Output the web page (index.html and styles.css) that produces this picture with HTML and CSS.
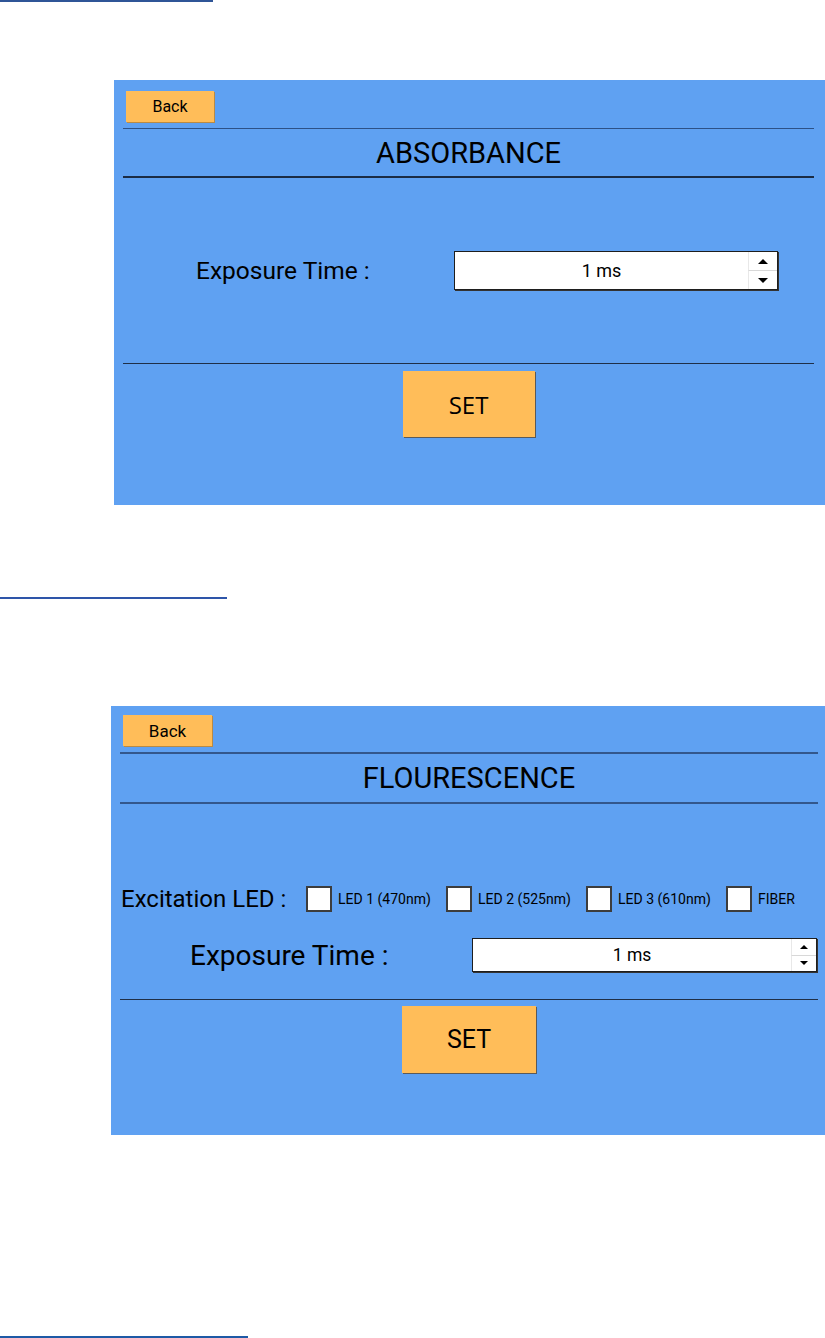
FILE: index.html
```html
<!DOCTYPE html>
<html>
<head>
<meta charset="utf-8">
<link rel="stylesheet" href="styles.css">
</head>
<body>
<div class="page">
  <div class="rule rule-a"></div>

  <section class="panel panel-abs">
    <div class="topbar"><button class="back">Back</button></div>
    <div class="hr hr-thin"></div>
    <h1 class="title">ABSORBANCE</h1>
    <div class="hr hr-thick"></div>
    <div class="body body-abs">
      <div class="row">
        <span class="label label-abs">Exposure Time :</span>
        <div class="spin spin-abs">
          <span class="spin-value">1 ms</span>
          <span class="spin-btns">
            <span class="spin-btn"><span class="tri up"></span></span>
            <span class="spin-btn"><span class="tri down"></span></span>
          </span>
        </div>
      </div>
    </div>
    <div class="hr hr-mid"></div>
    <div class="footer footer-abs"><button class="set">SET</button></div>
  </section>

  <div class="rule rule-b"></div>

  <section class="panel panel-flu">
    <div class="topbar"><button class="back">Back</button></div>
    <div class="hr hr-blue hr-first"></div>
    <h1 class="title">FLOURESCENCE</h1>
    <div class="hr hr-blue"></div>
    <div class="body body-flu">
      <div class="row row-led">
        <span class="label label-led">Excitation LED :</span>
        <div class="checks">
          <label class="check"><span class="box"></span><span class="check-text">LED 1 (470nm)</span></label>
          <label class="check"><span class="box"></span><span class="check-text">LED 2 (525nm)</span></label>
          <label class="check"><span class="box"></span><span class="check-text">LED 3 (610nm)</span></label>
          <label class="check"><span class="box"></span><span class="check-text">FIBER</span></label>
        </div>
      </div>
      <div class="row row-exp">
        <span class="label label-flu">Exposure Time :</span>
        <div class="spin spin-flu">
          <span class="spin-value">1 ms</span>
          <span class="spin-btns">
            <span class="spin-btn"><span class="tri up small"></span></span>
            <span class="spin-btn"><span class="tri down small"></span></span>
          </span>
        </div>
      </div>
    </div>
    <div class="hr hr-mid"></div>
    <div class="footer footer-flu"><button class="set">SET</button></div>
  </section>

  <div class="rule rule-c"></div>
</div>
</body>
</html>
```

FILE: styles.css
```css
* { box-sizing: border-box; }

html, body {
  margin: 0;
  padding: 0;
  background: #ffffff;
}

body {
  font-family: Roboto, "Noto Sans", "DejaVu Sans", sans-serif;
  color: #000;
}

.page {
  display: flex;
  flex-direction: column;
  width: 825px;
}

.rule { height: 2px; }
.rule-a { width: 213px; background: #2f5597; }
.rule-b { width: 227px; background: #2e55a9; margin-top: 92px; }
.rule-c { width: 248px; background: #1e5aa6; margin-top: 201px; }

.panel {
  background: #5fa1f2;
  display: flex;
  flex-direction: column;
}

.panel-abs {
  margin-top: 78px;
  margin-left: 114px;
  width: 711px;
  height: 425px;
  padding: 11px 11px 0 9px;
}

.panel-flu {
  margin-top: 107px;
  margin-left: 111px;
  width: 714px;
  height: 429px;
  padding: 9px 7px 0 9px;
}

.topbar {
  display: flex;
  height: 31px;
}

.back {
  margin: 0 0 0 3px;
  padding: 0;
  width: 88px;
  height: 31px;
  border: 0;
  background: #ffbd59;
  box-shadow: 1px 1px 0 #b98a45;
  font-family: Roboto, "Noto Sans", sans-serif;
  font-size: 16px;
  color: #000;
}

.panel-flu .back { width: 89px; font-size: 17px; }

.hr { width: 100%; flex: none; }
.hr-thin { height: 1px; background: #2c5187; margin-top: 6px; }
.hr-thick { height: 2px; background: #1b2c45; }
.hr-mid { height: 1px; background: #1f2f48; }
.hr-blue { height: 2px; background: #33578c; }
.hr-first { margin-top: 6px; }

.title {
  margin: 0;
  height: 47px;
  display: flex;
  align-items: center;
  justify-content: center;
  font-weight: 400;
  font-size: 29px;
  color: #000;
}

.panel-flu .title { height: 48px; }

.body {
  display: flex;
  flex-direction: column;
}

.body-abs {
  height: 185px;
  justify-content: center;
}

.body-flu {
  height: 195px;
  padding-top: 81px;
}

.row {
  display: flex;
  align-items: center;
}

.label {
  flex: none;
}

.label-abs {
  width: 331px;
  padding-left: 73px;
  font-size: 24.5px;
}

.label-led {
  width: 186px;
  padding-left: 1px;
  font-size: 24px;
}

.label-flu {
  width: 352px;
  padding-left: 70px;
  font-size: 28px;
}

.row-exp { margin-top: 25px; }

.spin {
  display: flex;
  background: #fff;
  border: 1px solid #1e1e1e;
  box-shadow: 1px 1px 0 #333;
}

.spin-abs { width: 324px; height: 39px; }
.spin-flu { width: 345px; height: 34px; }

.spin-value {
  flex: 1;
  display: flex;
  align-items: center;
  justify-content: center;
  font-size: 18px;
}

.spin-flu .spin-value { font-size: 17.5px; }

.spin-btns {
  display: flex;
  flex-direction: column;
  width: 29px;
}

.spin-flu .spin-btns { width: 25px; }

.spin-btn {
  flex: 1;
  display: flex;
  align-items: center;
  justify-content: center;
  border-left: 1px solid #e8e8e8;
}

.spin-btn + .spin-btn { border-top: 1px solid #d8d8d8; }

.tri {
  width: 0;
  height: 0;
  border-left: 5px solid transparent;
  border-right: 5px solid transparent;
}
.tri.up { border-bottom: 5px solid #000; }
.tri.down { border-top: 5px solid #000; }
.tri.small { border-left-width: 4px; border-right-width: 4px; }
.tri.up.small { border-bottom-width: 4px; }
.tri.down.small { border-top-width: 4px; }

.checks {
  display: flex;
}

.check {
  display: flex;
  align-items: center;
  width: 140px;
}

.box {
  width: 26px;
  height: 26px;
  background: #fff;
  border: 2px solid #3d3d3d;
  flex: none;
}

.check-text {
  margin-left: 6px;
  font-size: 14px;
}

.footer {
  display: flex;
  justify-content: center;
}

.footer-abs { padding-top: 7px; }
.footer-flu { padding-top: 6px; }

.set {
  margin: 0;
  padding: 0;
  width: 132px;
  height: 66px;
  border: 0;
  background: #ffbd59;
  box-shadow: 1px 1px 0 #5a5a5a;
  font-family: "Open Sans", Roboto, sans-serif;
  font-size: 24px;
  color: #000;
}

.footer-flu .set { width: 134px; height: 67px; font-family: Roboto, sans-serif; font-size: 25px; }
```
